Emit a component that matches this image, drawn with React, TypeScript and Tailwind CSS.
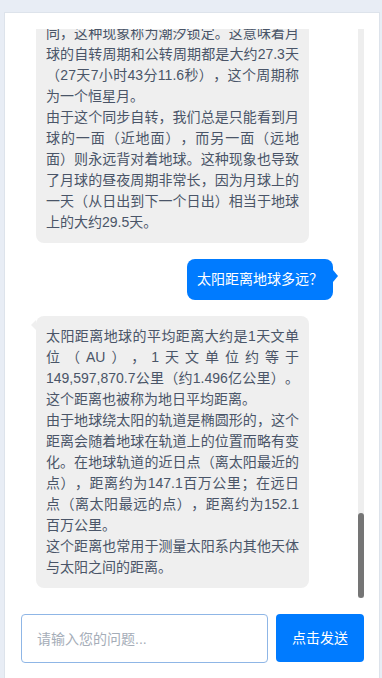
import React, { useLayoutEffect, useRef, useState } from 'react';

type Msg = { role: 'user' | 'bot'; text: string };

const HISTORY: Msg[] = [
  { role: 'bot', text: '您好！我是您的天文小助手，有什么关于宇宙和天体的问题都可以问我哦。' },
  { role: 'user', text: '流星是怎么形成的？' },
  {
    role: 'bot',
    text: '流星是太空中的微小颗粒（流星体）以极高的速度闯入地球大气层时，与空气剧烈摩擦并燃烧发光而形成的现象。大多数流星体只有沙粒大小，在距地面约80到120公里的高空就会完全燃尽。\n如果流星体足够大，没有在大气中完全烧毁而落到地面，就成为陨石。每年固定时间出现的流星雨，则是地球穿过彗星留下的碎片带时形成的，例如著名的英仙座流星雨和双子座流星雨。',
  },
  { role: 'user', text: '土星的光环是由什么组成的？' },
  {
    role: 'bot',
    text: '土星的光环主要由无数大小不一的冰块和岩石碎片组成，其中绝大部分是水冰，颗粒小到微米级的尘埃，大到几米甚至几十米的冰块。\n光环的直径可达约28万公里，但厚度通常只有几十米到一公里左右，非常薄。关于光环的起源，科学家认为它们可能来自被土星潮汐力撕碎的卫星或彗星。除了土星，木星、天王星和海王星也都有光环，只是要暗淡得多。',
  },
  { role: 'user', text: '银河系有多大？' },
  {
    role: 'bot',
    text: '银河系是一个棒旋星系，其银盘的直径约为10万光年，厚度约为1000光年，中心的核球区域则要更厚一些。银河系中大约有1000亿到4000亿颗恒星，以及大量的气体、尘埃和暗物质。\n太阳系位于银河系的猎户臂上，距离银河系中心约2.6万光年，绕银河系中心公转一周大约需要2.25亿至2.5亿年。',
  },
  { role: 'user', text: '黑洞是什么？' },
  {
    role: 'bot',
    text: '黑洞是时空中引力极强的区域，任何物质甚至光都无法从中逃脱。当大质量恒星耗尽核燃料后发生引力坍缩，就可能形成恒星级黑洞。\n黑洞的边界称为事件视界，一旦越过这个边界，就再也无法返回。虽然黑洞本身不发光，但科学家可以通过观测它对周围物质和光线的影响来发现它。2019年，人类首次公布了M87星系中心超大质量黑洞的照片。',
  },
  { role: 'user', text: '木星有多少颗卫星？' },
  {
    role: 'bot',
    text: '截至目前，已确认的木星卫星数量已超过90颗，而且随着观测技术的进步，这个数字还在不断增加。其中最著名的是1610年由伽利略发现的四颗大卫星：木卫一、木卫二、木卫三和木卫四，它们被统称为伽利略卫星。\n木卫三是太阳系中最大的卫星，直径甚至超过了水星；木卫二的冰层下面可能存在液态海洋，是寻找地外生命的重要目标之一。',
  },
  { role: 'user', text: '月球距离地球多远？' },
  {
    role: 'bot',
    text: '月球与地球之间的平均距离约为384,400公里，大约相当于地球直径的30倍。由于月球的公转轨道是一个椭圆，这个距离会不断变化：在近地点时约为363,300公里，在远地点时约为405,500公里。\n光从月球传到地球大约需要1.3秒。科学家通过阿波罗宇航员放置在月面上的激光反射器，可以把地月距离测量到厘米级的精度。',
  },
  { role: 'user', text: '月球有多大？' },
  {
    role: 'bot',
    text: '月球的平均半径约为1737公里，直径约为3474公里，大约是地球直径的四分之一。月球的质量约为地球质量的1/81，表面重力约为地球的1/6。\n月球是太阳系中第五大的天然卫星，仅次于木卫三、土卫六、木卫四和木卫一。相对于它所环绕的行星来说，月球是太阳系中比例最大的卫星之一。',
  },
  { role: 'user', text: '地球自转一周需要多长时间？' },
  {
    role: 'bot',
    text: '地球相对于遥远恒星自转一周的时间约为23小时56分4秒，这被称为一个恒星日。而我们日常使用的一天（太阳日）是24小时，这是太阳连续两次经过同一子午线所需的时间。\n两者之所以不同，是因为地球在自转的同时还在绕太阳公转，每天大约要多转约1度，才能让太阳回到天空中相同的位置。',
  },
  { role: 'user', text: '太阳有多大？' },
  {
    role: 'bot',
    text: '太阳的直径约为139.2万公里，大约是地球直径的109倍，体积约为地球的130万倍。太阳的质量占整个太阳系总质量的99.86%左右。\n太阳是一颗黄矮星（G2V型主序星），表面温度约为5500摄氏度，核心温度则高达约1500万摄氏度。它已经存在了大约46亿年，预计还会稳定燃烧约50亿年。',
  },
  { role: 'user', text: '什么是光年？' },
  {
    role: 'bot',
    text: '光年是天文学中常用的长度单位，指的是光在真空中一年内所走过的距离，约为9.46万亿公里。虽然名字中带有“年”字，但它衡量的是距离而不是时间。\n例如，离太阳系最近的恒星比邻星距离我们约4.24光年，这意味着我们现在看到的比邻星的光，是它在4年多以前发出的。银河系的直径约为10万光年。',
  },
  { role: 'user', text: '火星上有水吗？' },
  {
    role: 'bot',
    text: '火星上确实存在水，但主要以冰的形式存在。火星的两极有由水冰和干冰组成的极冠，地表以下也发现了大量的地下冰层。\n此外，探测器还在火星表面发现了古代河床、湖泊沉积物和含水矿物等证据，说明火星在数十亿年前可能拥有液态水甚至海洋。由于如今火星大气稀薄、气压很低，液态水很难在表面长期稳定存在。',
  },
  { role: 'user', text: '为什么我们总是只能看到月球的同一面？' },
  {
    role: 'bot',
    text: '月球总是以同一面朝向地球，这是因为月球的自转周期与其绕着地球公转的周期相同，这种现象称为潮汐锁定。这意味着月球的自转周期和公转周期都是大约27.3天（27天7小时43分11.6秒），这个周期称为一个恒星月。\n由于这个同步自转，我们总是只能看到月球的一面（近地面），而另一面（远地面）则永远背对着地球。这种现象也导致了月球的昼夜周期非常长，因为月球上的一天（从日出到下一个日出）相当于地球上的大约29.5天。',
  },
  { role: 'user', text: '太阳距离地球多远？' },
  {
    role: 'bot',
    text: '太阳距离地球的平均距离大约是1天文单位（AU），1天文单位约等于149,597,870.7公里（约1.496亿公里）。这个距离也被称为地日平均距离。\n由于地球绕太阳的轨道是椭圆形的，这个距离会随着地球在轨道上的位置而略有变化。在地球轨道的近日点（离太阳最近的点），距离约为147.1百万公里；在远日点（离太阳最远的点），距离约为152.1百万公里。\n这个距离也常用于测量太阳系内其他天体与太阳之间的距离。',
  },
];

const BotBubble = ({ text }: { text: string }) => (
  <div className="relative self-start w-[273px] rounded-[8px] bg-[#efefef] px-[10px] py-[10px] text-[14px] leading-[21px] text-[#4a5568] text-justify [text-spacing-trim:space-all]">
    <span className="absolute -left-[5px] top-[4px] h-0 w-0 border-y-[5px] border-r-[5px] border-y-transparent border-r-[#efefef]" />
    {text.split('\n').map((p, i) => (
      <p key={i}>{p}</p>
    ))}
  </div>
);

const UserBubble = ({ text }: { text: string }) => (
  <div className="relative self-end mr-[25px] rounded-[8px] bg-[#007bff] px-[10px] py-[10px] text-[14px] leading-[21px] text-white">
    <span className="absolute -right-[5px] top-[11px] h-0 w-0 border-y-[6px] border-l-[5px] border-y-transparent border-l-[#007bff]" />
    {text}
  </div>
);

export default function App() {
  const listRef = useRef<HTMLDivElement>(null);
  const [thumb, setThumb] = useState({ top: 0, height: 0 });

  const updateThumb = () => {
    const el = listRef.current;
    if (!el) return;
    const h = el.clientHeight;
    const height = Math.max(30, (h * h) / el.scrollHeight);
    const max = el.scrollHeight - h;
    const top = max > 0 ? (el.scrollTop / max) * (h - height) : 0;
    setThumb({ top, height });
  };

  useLayoutEffect(() => {
    const el = listRef.current;
    if (el) el.scrollTop = el.scrollHeight;
    updateThumb();
  }, []);

  return (
    <div
      className="min-h-screen bg-[#e8edf5] pl-[4px] pt-[12px]"
      style={{ fontFamily: '"Liberation Sans", "Noto Sans CJK SC", sans-serif' }}
    >
      <div className="w-[376px] border border-[#dde3eb] bg-white pl-4 pr-[15px] pt-4 pb-4">
        <div className="relative">
          <div
            ref={listRef}
            onScroll={updateThumb}
            className="flex h-[569px] flex-col gap-4 overflow-y-scroll pl-[15px] pr-[6px] pb-[10px] [scrollbar-width:none] [&::-webkit-scrollbar]:hidden"
          >
            {HISTORY.map((m, i) =>
              m.role === 'bot' ? <BotBubble key={i} text={m.text} /> : <UserBubble key={i} text={m.text} />
            )}
          </div>
          {/* scrollbar track */}
          <div className="absolute right-0 top-0 h-full w-[6px] bg-[#eeeeee]">
            <div
              className="absolute left-0 w-full rounded-full bg-[#757575]"
              style={{ top: thumb.top, height: thumb.height }}
            />
          </div>
        </div>

        <div className="mt-4 flex items-start gap-2">
          <input
            type="text"
            placeholder="请输入您的问题..."
            className="h-[49px] min-w-0 flex-1 rounded-[4px] border border-[#8fb6e6] px-[15px] text-[14px] text-[#4a5568] outline-none placeholder:text-[#a5adb8]"
          />
          <button className="h-[48px] w-[88px] rounded-[4px] bg-[#007bff] text-[14px] text-white">
            点击发送
          </button>
        </div>
      </div>
    </div>
  );
}
